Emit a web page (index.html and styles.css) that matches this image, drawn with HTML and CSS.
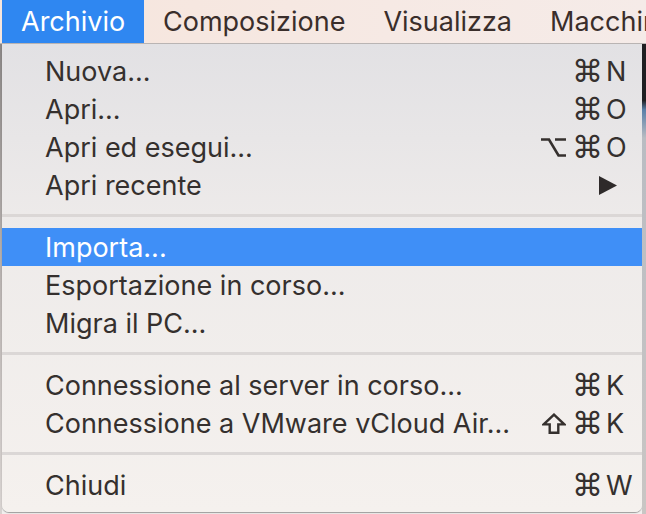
FILE: index.html
```html
<!DOCTYPE html>
<html lang="it">
<head>
<meta charset="utf-8">
<title>Menu Archivio</title>
<link rel="stylesheet" href="styles.css">
</head>
<body>
<div class="screen">
  <div class="menubar">
    <div class="mb-item active">Archivio</div>
    <div class="mb-item">Composizione</div>
    <div class="mb-item">Visualizza</div>
    <div class="mb-item">Macchina</div>
  </div>
  <div class="stage">
    <div class="side-left"></div>
    <div class="menu">
      <div class="row"><span class="label">Nuova...</span><span class="keys"><span class="mods"><span class="cmd">⌘</span></span><span class="key">N</span></span></div>
      <div class="row"><span class="label">Apri...</span><span class="keys"><span class="mods"><span class="cmd">⌘</span></span><span class="key">O</span></span></div>
      <div class="row"><span class="label">Apri ed esegui...</span><span class="keys"><span class="mods"><svg class="opt" width="25" height="19" viewBox="0 0 25 19"><path d="M0 1.5 H8 L17.5 17.5 H25 M14 1.5 H25" fill="none" stroke="#35302e" stroke-width="2.6"/></svg><span class="cmd">⌘</span></span><span class="key">O</span></span></div>
      <div class="row"><span class="label">Apri recente</span><svg class="arrow" width="18" height="19" viewBox="0 0 18 19"><polygon points="0,0 18,9.5 0,19" fill="#2e2a2a"/></svg></div>
      <div class="sep"></div>
      <div class="row selected"><span class="label">Importa...</span></div>
      <div class="row"><span class="label">Esportazione in corso...</span></div>
      <div class="row"><span class="label">Migra il PC...</span></div>
      <div class="sep"></div>
      <div class="row"><span class="label">Connessione al server in corso...</span><span class="keys"><span class="mods"><span class="cmd">⌘</span></span><span class="key">K</span></span></div>
      <div class="row"><span class="label">Connessione a VMware vCloud Air...</span><span class="keys"><span class="mods"><svg class="shift" width="24" height="21" viewBox="0 0 24 21"><path d="M12 1.6 L22.3 11.4 H16.3 V19.7 H7.7 V11.4 H1.7 Z" fill="none" stroke="#35302e" stroke-width="2.4" stroke-linejoin="miter"/></svg><span class="cmd">⌘</span></span><span class="key">K</span></span></div>
      <div class="sep"></div>
      <div class="row"><span class="label">Chiudi</span><span class="keys"><span class="mods"><span class="cmd">⌘</span></span><span class="key">W</span></span></div>
    </div>
    <div class="side-right"></div>
  </div>
</div>
</body>
</html>
```
FILE: styles.css
```css
* { box-sizing: border-box; }
html, body { margin: 0; padding: 0; }
body {
  width: 646px;
  height: 514px;
  overflow: hidden;
  background: #f1efee;
  font-family: "Inter", "Noto Sans", sans-serif;
  color: #35302e;
}
.screen { width: 646px; height: 514px; display: flex; flex-direction: column; }
.menubar {
  height: 44px;
  display: flex;
  align-items: stretch;
  background: linear-gradient(to right, #f6e5dc, #f6e9e4 60%, #f5ebe8);
  border-bottom: 1px solid #b9b4b3;
  font-size: 27px;
  color: #3a2e2b;
  white-space: nowrap;
  overflow: hidden;
}
.mb-item {
  display: flex;
  align-items: center;
  padding: 0 19px;
  flex-shrink: 0;
}
.mb-item.active {
  background: #2f87f1;
  color: #ffffff;
  margin-left: 2px;
  width: 142px;
}
.stage { flex: 1; display: flex; }
.side-left { width: 2px; background: linear-gradient(#8a8685, #b8b2b0 50%, #d8d3d1); }
.side-right { width: 4px; background: linear-gradient(#1f1f22 0, #1f1f22 12%, #5a7fa8 14%, #b9bcc2 20%, #c9c6c4 100%); }
.menu {
  width: 640px;
  height: 468px;
  background: linear-gradient(#e2e1e4, #eeebea 40%, #f5f1ee);
  border-radius: 0 0 7px 7px;
  box-shadow: 0 1px 1px rgba(0,0,0,0.35);
  padding: 8px 0;
  font-size: 27px;
  display: flex;
  flex-direction: column;
}
.row {
  height: 38px;
  display: flex;
  align-items: center;
  justify-content: space-between;
  padding: 0 0 0 43px;
  white-space: nowrap;
}
.row.selected { background: #3f8ff7; color: #ffffff; }
.keys { display: flex; align-items: center; padding-right: 6px; }
.mods {
  display: flex;
  align-items: center;
  gap: 6px;
}
.cmd {
  font-family: "DejaVu Sans", sans-serif;
  font-size: 31px;
  line-height: 1;
}
.opt { margin-top: 1px; }
.key { width: 30px; margin-left: 3px; text-align: left; }
.arrow { margin-right: 25px; }
.sep {
  height: 24px;
  display: flex;
  align-items: center;
}
.sep::before {
  content: "";
  display: block;
  width: 100%;
  height: 3px;
  background: #dbd7d6;
  margin-top: -2px;
}
```
